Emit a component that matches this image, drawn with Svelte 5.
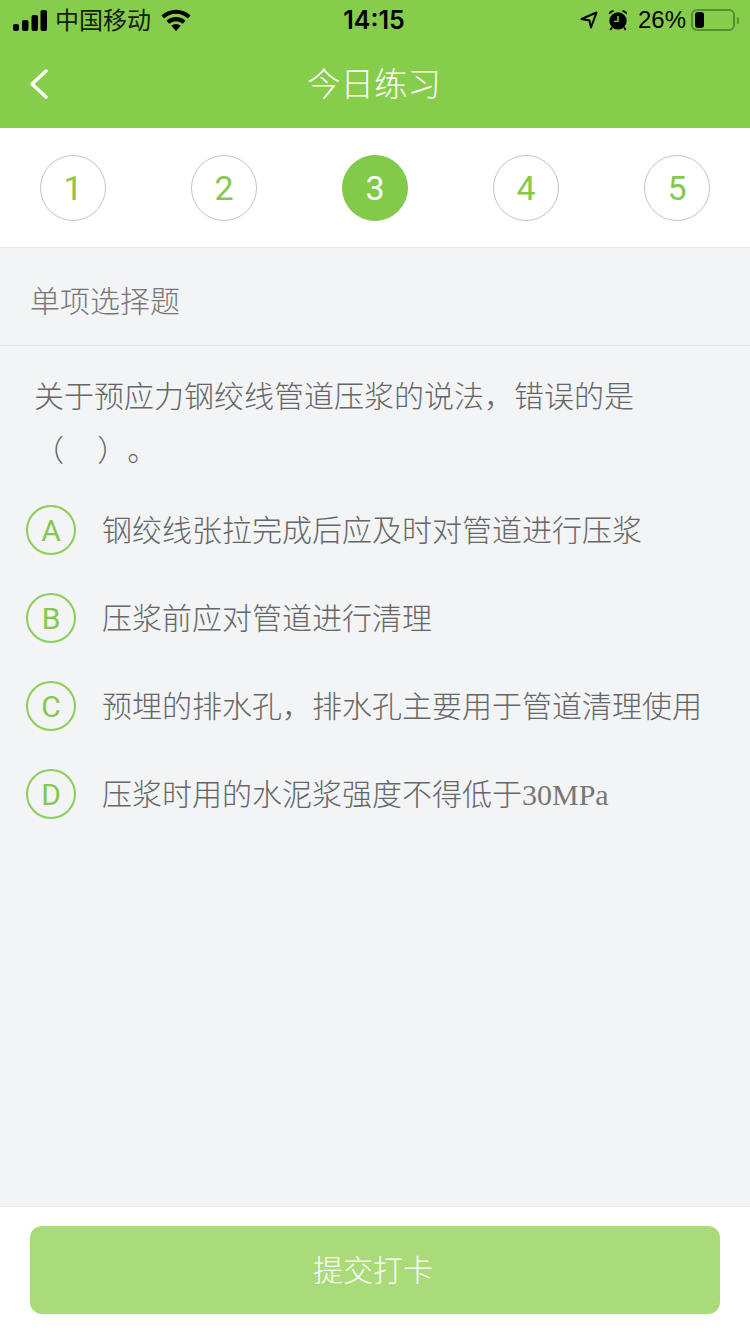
<script>
  const steps = [1, 2, 3, 4, 5];
  let current = 3;
  const options = [
    { key: "A", text: "钢绞线张拉完成后应及时对管道进行压浆" },
    { key: "B", text: "压浆前应对管道进行清理" },
    { key: "C", text: "预埋的排水孔，排水孔主要用于管道清理使用" },
    { key: "D", text: "压浆时用的水泥浆强度不得低于", latin: "30MPa" }
  ];
</script>

<div class="page">
  <header class="top">
    <div class="status">
      <div class="status-left">
        <svg class="signal" width="34" height="21" viewBox="0 0 34 21" fill="#000">
          <rect x="0" y="14" width="6" height="7" rx="2" />
          <rect x="9" y="10" width="6.500" height="11" rx="2" />
          <rect x="18.500" y="5" width="6.500" height="16" rx="2" />
          <rect x="27.500" y="0" width="6.500" height="21" rx="2" />
        </svg>
        <span class="carrier">中国移动</span>
        <svg class="wifi" width="30" height="22" viewBox="0 0 30 22" fill="#000">
          <path d="M0.500 6.500 A21 21 0 0 1 29.500 6.500 L26.800 9.500 A17 17 0 0 0 3.200 9.500 Z" />
          <path d="M5.500 11.800 A14 14 0 0 1 24.500 11.800 L21.800 14.800 A10 10 0 0 0 8.200 14.800 Z" />
          <path d="M10.300 16.800 A7 7 0 0 1 19.700 16.800 L15 22 Z" />
        </svg>
      </div>
      <span class="time">14:15</span>
      <div class="status-right">
        <svg class="arrow" width="18" height="18" viewBox="0 0 18 18" fill="none" stroke="#000" stroke-width="2" stroke-linejoin="round">
          <path d="M1.500 8 L16.500 1.500 L11 16.500 L9.500 9.500 Z" />
        </svg>
        <svg class="alarm" width="20" height="22" viewBox="0 0 22 24">
          <circle cx="11" cy="13" r="9.500" fill="#000" />
          <path d="M1 6 A4 4 0 0 1 7 2 Z M21 6 A4 4 0 0 0 15 2 Z" fill="#000" />
          <path d="M4.500 20 L2.500 23 M17.500 20 L19.500 23" stroke="#000" stroke-width="2" />
          <path d="M11 7.500 V13.500 H6.500" fill="none" stroke="#87cd4c" stroke-width="1.600" />
        </svg>
        <span class="pct">26%</span>
        <div class="battery"><div class="level"></div></div>
        <div class="nub"></div>
      </div>
    </div>
    <nav class="bar">
      <svg class="back" width="20" height="32" viewBox="0 0 20 32" fill="none" stroke="#fff" stroke-width="3.500" stroke-linecap="round" stroke-linejoin="round">
        <path d="M17 3 L3 16 L17 29" />
      </svg>
      <h1>今日练习</h1>
    </nav>
  </header>

  <div class="steps">
    {#each steps as n}
      <div class="step" class:active={n === current}>{n}</div>
    {/each}
  </div>

  <main class="body">
    <div class="kind">单项选择题</div>
    <div class="question">关于预应力钢绞线管道压浆的说法，错误的是<br /><span class="blank">（&nbsp;&nbsp;&nbsp;&nbsp;&nbsp;）。</span></div>
    <ul class="options">
      {#each options as o}
        <li>
          <span class="key">{o.key}</span>
          <span class="text">{o.text}{#if o.latin}<span class="latin">{o.latin}</span>{/if}</span>
        </li>
      {/each}
    </ul>
  </main>

  <footer class="foot">
    <button>提交打卡</button>
  </footer>
</div>

<style>
  :global(body) {
    margin: 0;
    background: #f2f4f6;
  }
  .page {
    width: 750px;
    height: 1334px;
    display: flex;
    flex-direction: column;
    font-family: "Noto Sans CJK SC", "Liberation Sans", sans-serif;
    overflow: hidden;
  }
  .top {
    background: #87cd4c;
    height: 128px;
    flex: none;
  }
  .status {
    height: 40px;
    padding: 0 11px 0 13px;
    display: flex;
    align-items: center;
    justify-content: space-between;
    color: #000;
    position: relative;
  }
  .status-left,
  .status-right {
    display: flex;
    align-items: center;
  }
  .carrier {
    font-size: 24px;
    margin: -3px 0 0 8px;
    color: #10200a;
  }
  .wifi {
    margin-left: 10px;
  }
  .time {
    position: absolute;
    left: 0;
    right: 0;
    text-align: center;
    font: 600 25px "Inter", "Liberation Sans", sans-serif;
    pointer-events: none;
    padding-right: 2px;
  }
  .arrow {
    margin-right: 10px;
  }
  .alarm {
    margin-right: 10px;
  }
  .pct {
    font: 400 24px "Liberation Sans", sans-serif;
    margin-right: 5px;
  }
  .battery {
    width: 36px;
    height: 16px;
    border: 2px solid #558f30;
    border-radius: 6px;
    padding: 1px 2px;
    box-sizing: content-box;
  }
  .level {
    width: 9px;
    height: 16px;
    background: #000;
    border-radius: 3px;
  }
  .nub {
    width: 2px;
    height: 7px;
    margin-left: 2px;
    background: #558f30;
    border-radius: 0 2px 2px 0;
  }
  .bar {
    height: 88px;
    position: relative;
    display: flex;
    align-items: center;
    justify-content: center;
  }
  .back {
    position: absolute;
    left: 29px;
    top: 28px;
  }
  h1 {
    margin: 0;
    padding-right: 2px;
    font-size: 33.500px;
    font-weight: 300;
    color: #fff;
    position: relative;
    top: -3px;
  }
  .steps {
    flex: none;
    background: #fff;
    border-bottom: 1px solid #e6e7e9;
    padding: 27px 40px 0;
    display: flex;
    justify-content: space-between;
    align-items: flex-start;
    height: 92px;
  }
  .step {
    width: 66px;
    height: 66px;
    box-sizing: border-box;
    border: 1px solid #c4c4c4;
    border-radius: 50%;
    display: flex;
    align-items: center;
    justify-content: center;
    color: #86c84e;
    font: 400 34px "Roboto", "Liberation Sans", sans-serif;
  }
  .step.active {
    background: #83c94a;
    border-color: #83c94a;
    color: #fff;
  }
  .body {
    flex: 1;
    background: #f2f4f6;
    color: #666;
  }
  .kind {
    height: 98px;
    box-sizing: border-box;
    border-bottom: 1px solid #e4e6e8;
    padding-left: 30px;
    font-size: 30px;
    font-weight: 300;
    line-height: 103px;
    color: #777;
  }
  .question {
    padding: 21px 30px 0 34px;
    font-size: 30px;
    font-weight: 300;
    line-height: 54px;
    text-spacing-trim: space-all;
  }
  .options {
    list-style: none;
    margin: 11px 0 0;
    padding: 0 0 0 26px;
  }
  .options li {
    height: 88px;
    display: flex;
    align-items: center;
  }
  .key {
    flex: none;
    width: 50px;
    height: 50px;
    box-sizing: border-box;
    border: 2px solid #8bcf57;
    border-radius: 50%;
    display: flex;
    align-items: center;
    justify-content: center;
    color: #86c84e;
    font: 400 30px "Roboto", "Liberation Sans", sans-serif;
  }
  .text {
    margin-left: 26px;
    padding-bottom: 4px;
    font-size: 30px;
    font-weight: 300;
    white-space: nowrap;
  }
  .latin {
    font-family: "Liberation Serif", serif;
    font-weight: 400;
    color: #777;
  }
  .foot {
    flex: none;
    background: #fff;
    border-top: 1px solid #e8e9eb;
    padding: 19px 30px 0;
    height: 108px;
  }
  button {
    width: 100%;
    height: 88px;
    border: 0;
    border-radius: 12px;
    background: #a9dc78;
    color: #fff;
    font-family: inherit;
    font-size: 30px;
    font-weight: 300;
    padding: 0 4px 4px 0;
  }
</style>
